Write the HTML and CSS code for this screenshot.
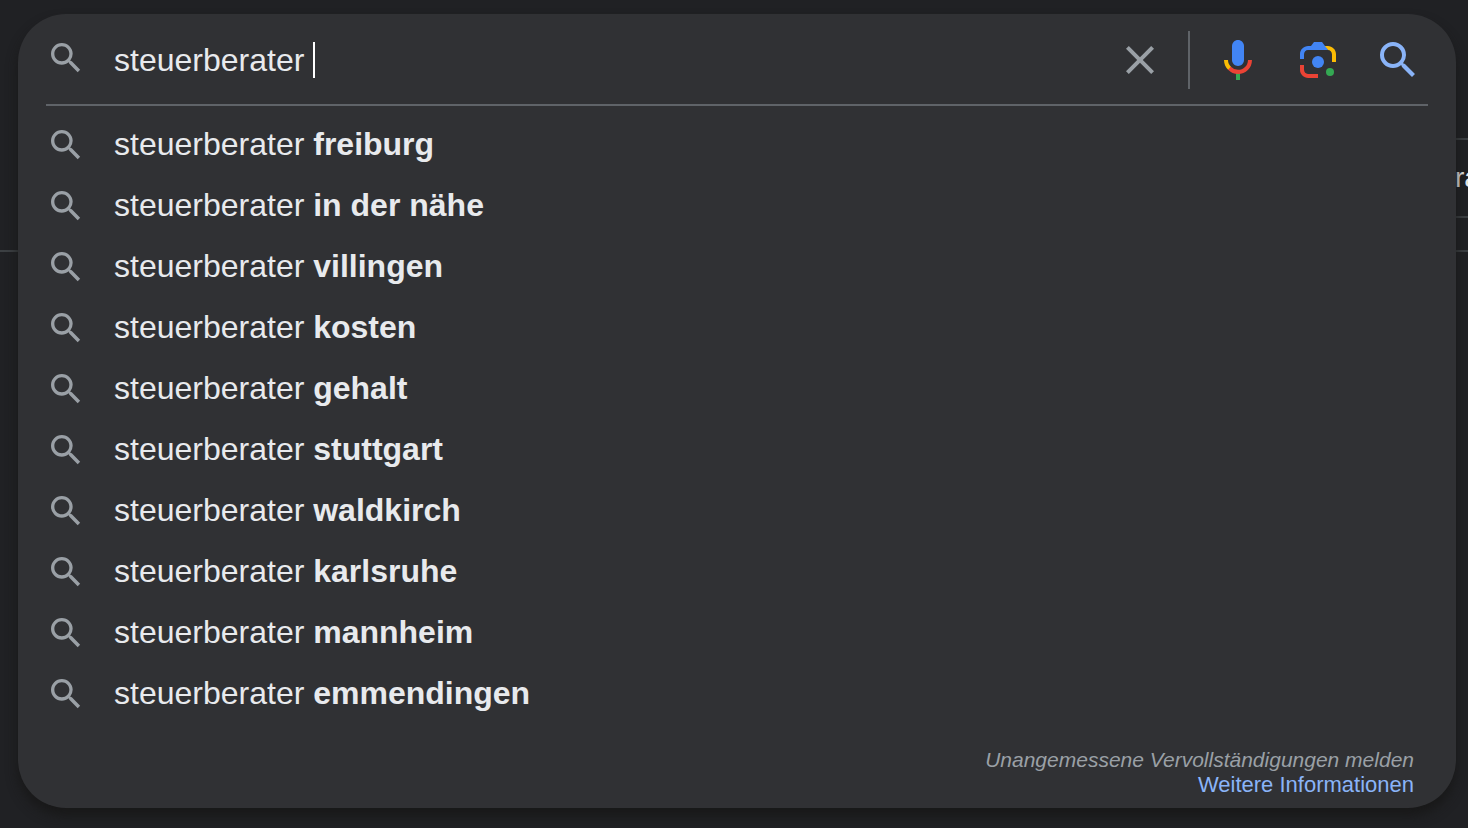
FILE: index.html
```html
<!DOCTYPE html>
<html lang="de">

<head>
    <meta charset="UTF-8">
    <meta name="viewport" content="width=device-width, initial-scale=1.0">
    <title>steuerberater - Suche</title>
    <link rel="stylesheet" href="styles.css">
</head>

<body>
    <svg class="sprite" aria-hidden="true">
        <symbol id="icon-search" viewBox="0 0 24 24">
            <path d="M15.5 14l-1-.4A6.471 6.471 0 0 0 16 9.5 6.5 6.5 0 1 0 9.5 16c1.6 0 3-.55 4.1-1.5l.4 1 5 4.99L20.49 19l-4.99-5zm-6 0C7.01 14 5 11.99 5 9.5S7.01 5 9.5 5 14 7.01 14 9.5 11.99 14 9.5 14z"/>
        </symbol>
    </svg>

    <!-- results page behind the search box -->
    <div class="page-behind">
        <div class="chip">ra</div>
    </div>

    <form class="search-box" role="search">
        <div class="search-bar">
            <svg class="icon-small icon-bar"><use href="#icon-search"/></svg>
            <div class="field">
                <input class="query" type="text" name="q" value="steuerberater " aria-label="Suche" autocomplete="off">
                <span class="caret"></span>
            </div>
            <button class="icon-button clear" type="reset" aria-label="Löschen">
                <svg viewBox="0 0 24 24">
                    <path d="M19 6.41L17.59 5 12 10.59 6.41 5 5 6.41 10.59 12 5 17.59 6.41 19 12 13.41 17.59 19 19 17.59 13.41 12z"/>
                </svg>
            </button>
            <div class="tools">
                <button class="icon-button" type="button" aria-label="Sprachsuche">
                    <svg viewBox="0 0 24 24">
                        <path fill="#4285f4" d="m12 15c1.66 0 3-1.31 3-2.97v-7.02c0-1.66-1.34-3.01-3-3.01s-3 1.34-3 3.01v7.02c0 1.66 1.34 2.97 3 2.97z"/>
                        <path fill="#34a853" d="m11 18.08h2v3.92h-2z"/>
                        <path fill="#fbbc04" d="m7.05 16.87c-1.27-1.33-2.05-2.83-2.05-4.87h2c0 1.45 0.56 2.42 1.47 3.38v0.32l-1.15 1.18z"/>
                        <path fill="#ea4335" d="m12 16.93a4.97 5.25 0 0 1-3.54-1.55l-1.41 1.49c1.26 1.34 3.02 2.13 4.95 2.13 3.87 0 6.99-2.92 6.99-7h-1.99c0 2.92-2.24 4.93-5 4.93z"/>
                    </svg>
                </button>
                <button class="icon-button" type="button" aria-label="Bildersuche">
                    <svg viewBox="0 0 192 192">
                        <circle fill="#34a853" cx="144" cy="144" r="16"/>
                        <circle fill="#4285f4" cx="96" cy="104" r="24"/>
                        <path fill="#ea4335" d="M24 135.2c0 18.11 14.69 32.8 32.8 32.8H96v-16l-40.1-.1c-8.8 0-15.9-8.19-15.9-17.9v-18H24v19.2z"/>
                        <path fill="#fbbc04" d="M168 72.8c0-18.11-14.69-32.8-32.8-32.8H116l20 16c8.8 0 16 8.29 16 18v30h16V72.8z"/>
                        <path fill="#4285f4" d="M112 24H80L68 40H56.8C38.69 40 24 54.69 24 72.8V92h16V74c0-9.71 7.2-18 16-18h80l-12-16-12-16z"/>
                    </svg>
                </button>
                <button class="icon-button submit" type="submit" aria-label="Suchen">
                    <svg><use href="#icon-search"/></svg>
                </button>
            </div>
        </div>

        <ul class="suggestions">
            <li><svg class="icon-small"><use href="#icon-search"/></svg><span>steuerberater <b>freiburg</b></span></li>
            <li><svg class="icon-small"><use href="#icon-search"/></svg><span>steuerberater <b>in der nähe</b></span></li>
            <li><svg class="icon-small"><use href="#icon-search"/></svg><span>steuerberater <b>villingen</b></span></li>
            <li><svg class="icon-small"><use href="#icon-search"/></svg><span>steuerberater <b>kosten</b></span></li>
            <li><svg class="icon-small"><use href="#icon-search"/></svg><span>steuerberater <b>gehalt</b></span></li>
            <li><svg class="icon-small"><use href="#icon-search"/></svg><span>steuerberater <b>stuttgart</b></span></li>
            <li><svg class="icon-small"><use href="#icon-search"/></svg><span>steuerberater <b>waldkirch</b></span></li>
            <li><svg class="icon-small"><use href="#icon-search"/></svg><span>steuerberater <b>karlsruhe</b></span></li>
            <li><svg class="icon-small"><use href="#icon-search"/></svg><span>steuerberater <b>mannheim</b></span></li>
            <li><svg class="icon-small"><use href="#icon-search"/></svg><span>steuerberater <b>emmendingen</b></span></li>
        </ul>

        <div class="footer">
            <a class="report" href="#">Unangemessene Vervollständigungen melden</a>
            <a class="more" href="#">Weitere Informationen</a>
        </div>
    </form>
</body>

</html>
```
FILE: styles.css
```css
* {
    margin: 0;
    padding: 0;
    box-sizing: border-box;
}

body {
    position: relative;
    display: flow-root;
    min-height: 100vh;
    overflow-x: hidden;
    background: #202124;
    color: #e8eaed;
    font-family: "Liberation Sans", Arial, sans-serif;
}

.sprite {
    display: none;
}

/* page under the open search box */
.page-behind {
    position: absolute;
    top: 0;
    left: 0;
    right: 0;
    height: 252px;
    padding-top: 138px;
    border-bottom: 2px solid #3c4043;
    overflow: hidden;
}

.chip {
    width: 80px;
    height: 80px;
    margin-left: auto;
    padding-left: 67px;
    border-top: 2px solid #3c4043;
    border-bottom: 2px solid #3c4043;
    font-size: 28px;
    line-height: 76px;
}

.search-box {
    position: relative;
    margin: 14px 12px 20px 18px;
    padding: 0 28px 11px;
    background: #303134;
    border-radius: 48px;
    box-shadow: 0 8px 12px rgba(23, 23, 23, 0.9);
}

.search-bar {
    display: flex;
    align-items: center;
    height: 92px;
    padding-top: 2px;
    border-bottom: 2px solid #5f6368;
}

.icon-small {
    flex: none;
    width: 40px;
    height: 40px;
    margin-right: 28px;
    fill: #9aa0a6;
}

.icon-bar {
    margin-bottom: 4px;
}

.field {
    display: flex;
    flex: 1;
    align-items: center;
    min-width: 0;
}

.query {
    field-sizing: content;
    max-width: 100%;
    border: none;
    outline: none;
    background: transparent;
    color: #e8eaed;
    caret-color: transparent;
    font-family: inherit;
    font-size: 32px;
}

.caret {
    width: 2px;
    height: 36px;
    background: #fff;
}

.icon-button {
    flex: none;
    width: 48px;
    height: 48px;
    border: none;
    background: transparent;
    cursor: pointer;
}

.icon-button svg {
    display: block;
    width: 48px;
    height: 48px;
}

.clear {
    margin-right: 24px;
    fill: #9aa0a6;
}

.tools {
    display: flex;
    align-items: center;
    gap: 32px;
    height: 58px;
    padding: 0 6px 0 24px;
    border-left: 2px solid #5f6368;
}

.submit {
    fill: #8ab4f8;
}

.suggestions {
    padding-top: 8px;
    list-style: none;
}

.suggestions li {
    display: flex;
    align-items: center;
    height: 61px;
    font-size: 32px;
    cursor: default;
}

.footer {
    display: flex;
    flex-direction: column;
    align-items: flex-end;
    padding: 23px 14px 0 0;
    line-height: 25px;
}

.footer a {
    text-decoration: none;
}

.report {
    color: #9aa0a6;
    font-size: 21px;
    font-style: italic;
}

.more {
    color: #8ab4f8;
    font-size: 22px;
}
```
